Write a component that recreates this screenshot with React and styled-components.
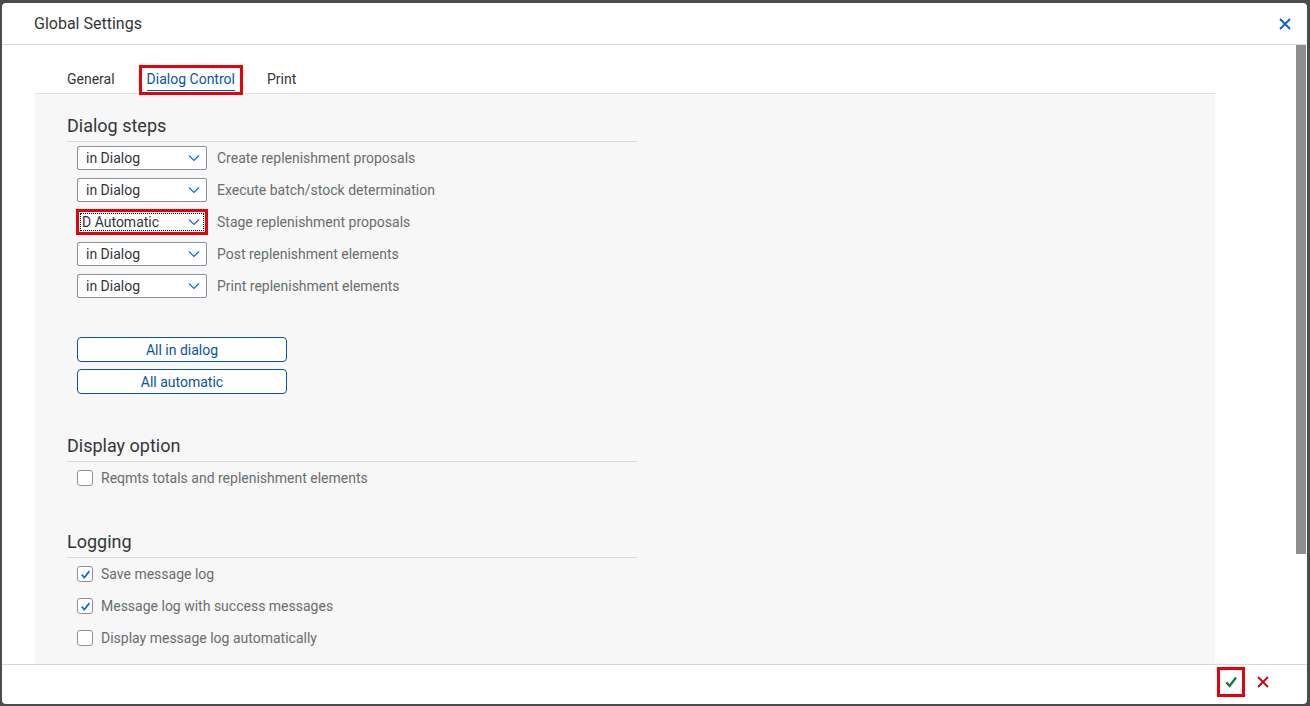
import React from "react";
import styled, { createGlobalStyle, css } from "styled-components";

const GlobalStyle = createGlobalStyle`
  html, body {
    margin: 0;
    padding: 0;
    background: #4b4b4b;
  }
  body {
    font-family: Roboto, "Liberation Sans", Arial, sans-serif;
    color: #32363a;
  }
`;

const steps = [
  { value: "in Dialog", label: "Create replenishment proposals" },
  { value: "in Dialog", label: "Execute batch/stock determination" },
  { value: "D Automatic", label: "Stage replenishment proposals", marked: true },
  { value: "in Dialog", label: "Post replenishment elements" },
  { value: "in Dialog", label: "Print replenishment elements" },
];

const logging = [
  { label: "Save message log", checked: true },
  { label: "Message log with success messages", checked: true },
  { label: "Display message log automatically", checked: false },
];

const redBox = css`
  position: relative;
  &::after {
    content: "";
    position: absolute;
    border: 3px solid #e8000b;
    pointer-events: none;
  }
`;

const Chevron = () => (
  <svg width="12" height="8" viewBox="0 0 12 8">
    <path d="M1 1.5 L6 6.5 L11 1.5" fill="none" stroke="#0a6ed1" strokeWidth="1.2" />
  </svg>
);

const Tick = ({ color = "#0a6ed1", size = 11, width = 1.6 }) => (
  <svg width={size} height={size} viewBox="0 0 10 10">
    <path d="M1.6 5.2 L4 7.8 L8.6 1.8" fill="none" stroke={color} strokeWidth={width} />
  </svg>
);

const App = () => {
  return (
    <>
      <GlobalStyle />
      <Dialog>
        <Header>
          <Title>Global Settings</Title>
          <CloseButton aria-label="close">
            <svg width="12" height="12" viewBox="0 0 12 12">
              <path d="M1 1 L11 11 M11 1 L1 11" stroke="#0b61b4" strokeWidth="1.8" />
            </svg>
          </CloseButton>
        </Header>
        <Body>
          <Content>
            <TabBar>
              <Tab>General</Tab>
              <Tab active marked>Dialog Control</Tab>
              <Tab>Print</Tab>
            </TabBar>
            <Panel>
              <Section>
                <SectionTitle>Dialog steps</SectionTitle>
                <StepList>
                  {steps.map((s, i) => (
                    <StepRow key={i}>
                      <Select marked={s.marked}>
                        <SelectText>{s.value}</SelectText>
                        <Chevron />
                      </Select>
                      <StepLabel>{s.label}</StepLabel>
                    </StepRow>
                  ))}
                </StepList>
                <ButtonStack>
                  <GhostButton>All in dialog</GhostButton>
                  <GhostButton>All automatic</GhostButton>
                </ButtonStack>
              </Section>
              <Section gap={40}>
                <SectionTitle>Display option</SectionTitle>
                <CheckRow>
                  <CheckBox />
                  <CheckLabel>Reqmts totals and replenishment elements</CheckLabel>
                </CheckRow>
              </Section>
              <Section gap={36}>
                <SectionTitle>Logging</SectionTitle>
                {logging.map((l, i) => (
                  <CheckRow key={i}>
                    <CheckBox>{l.checked && <Tick />}</CheckBox>
                    <CheckLabel>{l.label}</CheckLabel>
                  </CheckRow>
                ))}
              </Section>
            </Panel>
          </Content>
          <ScrollTrack>
            <ScrollThumb />
          </ScrollTrack>
        </Body>
        <Footer>
          <FooterButton marked>
            <Tick color="#107e3e" size={14} width={1.7} />
          </FooterButton>
          <FooterButton>
            <svg width="12" height="12" viewBox="0 0 12 12">
              <path d="M1 1 L11 11 M11 1 L1 11" stroke="#d0000a" strokeWidth="1.8" />
            </svg>
          </FooterButton>
        </Footer>
      </Dialog>
    </>
  );
};

export default App;

const Dialog = styled.div`
  box-sizing: border-box;
  margin: 3px 3px 0 2px;
  width: 1305px;
  height: 701px;
  background: #ffffff;
  border-radius: 4px;
  display: flex;
  flex-direction: column;
  overflow: hidden;
`;

const Header = styled.div`
  flex: 0 0 41px;
  display: flex;
  align-items: center;
  justify-content: space-between;
  padding: 0 12px 0 32px;
  border-bottom: 1px solid #d9d9d9;
`;

const Title = styled.div`
  font-size: 16px;
  color: #32363a;
`;

const CloseButton = styled.div`
  width: 20px;
  height: 20px;
  display: flex;
  align-items: center;
  justify-content: center;
`;

const Body = styled.div`
  flex: 1;
  display: flex;
  min-height: 0;
`;

const Content = styled.div`
  flex: 1;
  padding: 0 81px 0 33px;
  display: flex;
  flex-direction: column;
`;

const TabBar = styled.div`
  display: flex;
  padding: 20px 0 0 16px;
  border-bottom: 1px solid #e0e0e0;
`;

const Tab = styled.div`
  height: 28px;
  margin: 0 8px;
  padding: 0 8px;
  display: flex;
  align-items: center;
  font-size: 14px;
  color: ${({ active }) => (active ? "#0854a0" : "#32363a")};
  ${({ active }) =>
    active &&
    css`
      background-image: linear-gradient(#0854a0, #0854a0);
      background-size: calc(100% - 16px) 1px;
      background-position: 8px 25px;
      background-repeat: no-repeat;
    `}
  ${({ marked }) =>
    marked &&
    css`
      ${redBox}
      &::after {
        left: 0;
        right: 0;
        top: 0;
        bottom: -2px;
      }
    `}
`;

const Panel = styled.div`
  flex: 1;
  background: #f7f7f7;
  padding: 20px 32px 0;
`;

const Section = styled.div`
  width: 570px;
  margin-top: ${({ gap = 0 }) => gap}px;
`;

const SectionTitle = styled.div`
  font-size: 18px;
  line-height: 24px;
  padding-bottom: 3px;
  border-bottom: 1px solid #d9d9d9;
  color: #32363a;
`;

const StepList = styled.div`
  display: flex;
  flex-direction: column;
  gap: 8px;
  padding: 4px 0 0 10px;
`;

const StepRow = styled.div`
  display: flex;
  align-items: center;
  gap: 10px;
`;

const Select = styled.div`
  box-sizing: border-box;
  width: 130px;
  height: 24px;
  background: #ffffff;
  border: 1px solid #89919a;
  border-radius: 2px;
  display: flex;
  align-items: center;
  justify-content: space-between;
  padding: 0 6px 0 8px;
  ${({ marked }) =>
    marked &&
    css`
      ${redBox}
      border-color: transparent;
      padding-left: 4px;
      &::after {
        left: -2px;
        right: -2px;
        top: -2px;
        bottom: -2px;
      }
      &::before {
        content: "";
        position: absolute;
        left: 2px;
        right: 2px;
        top: 2px;
        bottom: 2px;
        border: 1px dotted #000000;
      }
    `}
`;

const SelectText = styled.span`
  font-size: 14px;
  color: #32363a;
`;

const StepLabel = styled.span`
  font-size: 14px;
  color: #6a6d70;
`;

const ButtonStack = styled.div`
  display: flex;
  flex-direction: column;
  gap: 7px;
  margin: 39px 0 0 10px;
`;

const GhostButton = styled.div`
  box-sizing: border-box;
  width: 210px;
  height: 25px;
  border: 1px solid #0854a0;
  border-radius: 4px;
  background: #ffffff;
  color: #0854a0;
  font-size: 14px;
  display: flex;
  align-items: center;
  justify-content: center;
`;

const CheckRow = styled.div`
  height: 32px;
  display: flex;
  align-items: center;
  gap: 8px;
  padding-left: 10px;
`;

const CheckBox = styled.div`
  box-sizing: border-box;
  width: 16px;
  height: 16px;
  border: 1px solid #89919a;
  border-radius: 3px;
  background: #ffffff;
  display: flex;
  align-items: center;
  justify-content: center;
`;

const CheckLabel = styled.span`
  font-size: 14px;
  color: #6a6d70;
`;

const ScrollTrack = styled.div`
  width: 11px;
  background: #ffffff;
`;

const ScrollThumb = styled.div`
  width: 10px;
  height: 509px;
  background: #8e8e8e;
`;

const Footer = styled.div`
  box-sizing: border-box;
  flex: 0 0 40px;
  border-top: 1px solid #d9d9d9;
  display: flex;
  align-items: flex-start;
  justify-content: flex-end;
  gap: 4px;
  padding: 2px 30px 0 0;
`;

const FooterButton = styled.div`
  width: 28px;
  height: 30px;
  display: flex;
  align-items: center;
  justify-content: center;
  ${({ marked }) =>
    marked &&
    css`
      ${redBox}
      &::after {
        inset: 0;
      }
    `}
`;
